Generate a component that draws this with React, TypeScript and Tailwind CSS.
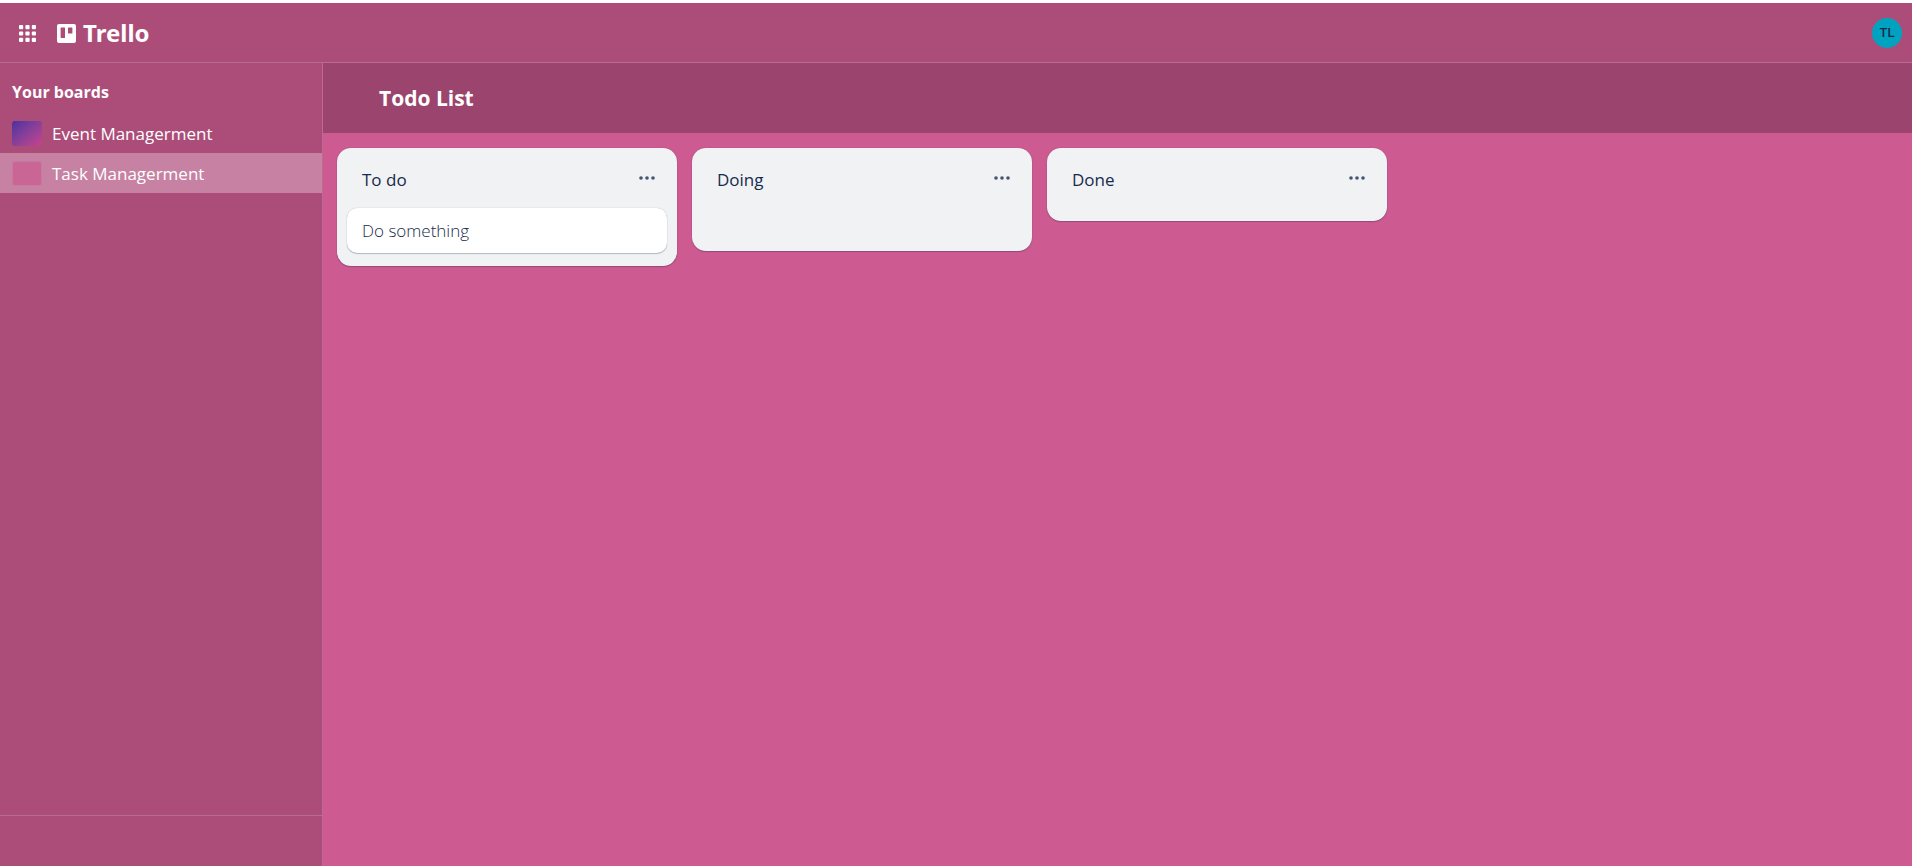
import React from "react";

type Board = { name: string; swatch: string; active?: boolean };
type List = { title: string; cards: string[]; size: string };

const boards: Board[] = [
  { name: "Event Managerment", swatch: "bg-linear-to-br from-[#4c2f9f] to-[#c9418c]" },
  { name: "Task Managerment", swatch: "bg-[#ca6695] border border-[#cb78a1]", active: true },
];

const lists: List[] = [
  { title: "To do", cards: ["Do something"], size: "" },
  { title: "Doing", cards: [], size: "min-h-[103px]" },
  { title: "Done", cards: [], size: "min-h-[73px]" },
];

function AppsIcon() {
  return (
    <svg width="17" height="17" viewBox="0 0 17 17" fill="white" aria-hidden="true">
      {[0, 6.4, 12.8].map((y) =>
        [0, 6.4, 12.8].map((x) => <rect key={`${x}-${y}`} x={x} y={y} width="4.2" height="4.2" rx="1" />),
      )}
    </svg>
  );
}

function TrelloMark() {
  return (
    <svg width="19" height="19" viewBox="0 0 19 19" aria-hidden="true">
      <path
        fill="white"
        fillRule="evenodd"
        d="M2 0h15a2 2 0 0 1 2 2v15a2 2 0 0 1-2 2H2a2 2 0 0 1-2-2V2a2 2 0 0 1 2-2Zm2.100 3.600a.5.5 0 0 0-.5.5v9.400c0 .3.2.5.5.5h3.400a.5.5 0 0 0 .5-.5V4.100a.5.5 0 0 0-.5-.5Zm7.400 0a.5.5 0 0 0-.5.5v4.900c0 .3.2.5.5.5h3.400a.5.5 0 0 0 .5-.5V4.100a.5.5 0 0 0-.5-.5Z"
      />
    </svg>
  );
}

function MoreIcon() {
  return (
    <svg width="16" height="4" viewBox="0 0 16 4" fill="#44546f" aria-hidden="true">
      <circle cx="2" cy="2" r="1.800" />
      <circle cx="8" cy="2" r="1.800" />
      <circle cx="14" cy="2" r="1.800" />
    </svg>
  );
}

function Column({ list }: { list: List }) {
  return (
    <section
      className={`w-[340px] shrink-0 rounded-[14px] bg-[#f1f2f4] px-[10px] pt-4 pb-[13px] shadow-[0_1px_1px_#091e4240,0_0_1px_#091e424f] ${list.size}`}
    >
      <div className="flex h-8 items-start justify-between pr-3 pl-[15px]">
        <h2 className="text-[17px] leading-8 text-[#172b4d]">{list.title}</h2>
        <button type="button" aria-label={`${list.title} actions`} className="flex h-7 items-center">
          <MoreIcon />
        </button>
      </div>
      {list.cards.length > 0 && (
        <ul className="mt-3">
          {list.cards.map((card) => (
            <li
              key={card}
              className="rounded-[10px] bg-white px-[15px] pt-[11px] pb-[10px] text-[17px] leading-6 font-light text-[#172b4d] shadow-[0_1px_1px_#091e4240,0_0_1px_#091e424f]"
            >
              {card}
            </li>
          ))}
        </ul>
      )}
    </section>
  );
}

export default function App() {
  return (
    <div className="flex h-screen flex-col border-t-[3px] border-white bg-[#cd5a91] font-['Open_Sans','Noto_Sans',sans-serif]">
      <header className="flex h-[60px] shrink-0 items-center justify-between border-b border-[#bb6a91] bg-[#ac4d79] pt-px pr-[10px] pl-[19px]">
        <div className="flex items-center gap-[21px]">
          <button type="button" aria-label="Apps">
            <AppsIcon />
          </button>
          <a href="#" className="flex items-center gap-[7px] font-['Noto_Sans',sans-serif] text-2xl font-bold text-white">
            <TrelloMark />
            Trello
          </a>
        </div>
        <button
          type="button"
          aria-label="Account"
          className="flex size-[30px] items-center justify-center rounded-full bg-[#00a3bf] font-[Roboto,sans-serif] text-[13px] font-medium text-[#172b4d]"
        >
          TL
        </button>
      </header>
      <div className="flex min-h-0 flex-1">
        <aside className="flex w-[323px] shrink-0 flex-col border-r border-[#bf6a94] bg-[#ac4d79] text-white">
          <h2 className="px-3 pt-[17px] pb-[9px] text-base leading-6 font-bold">Your boards</h2>
          <nav className="flex-1">
            {boards.map((board) => (
              <a
                key={board.name}
                href="#"
                className={`flex h-10 items-center gap-[10px] px-3 text-[17px] ${board.active ? "bg-[#c782a3]" : ""}`}
              >
                <span className={`h-[25px] w-[30px] rounded-[3px] ${board.swatch}`} />
                <span className="pt-[2px]">{board.name}</span>
              </a>
            ))}
          </nav>
          <div className="h-[51px] border-t border-[#bb6a91]" />
        </aside>
        <main className="flex min-w-0 flex-1 flex-col">
          <div className="flex h-[70px] shrink-0 items-center bg-[#9b446d] px-14 pt-[2px]">
            <h1 className="text-[21px] font-bold text-white">Todo List</h1>
          </div>
          <div className="flex flex-1 items-start gap-[15px] overflow-x-auto px-[14px] pt-[15px]">
            {lists.map((list) => (
              <Column key={list.title} list={list} />
            ))}
          </div>
        </main>
      </div>
    </div>
  );
}
